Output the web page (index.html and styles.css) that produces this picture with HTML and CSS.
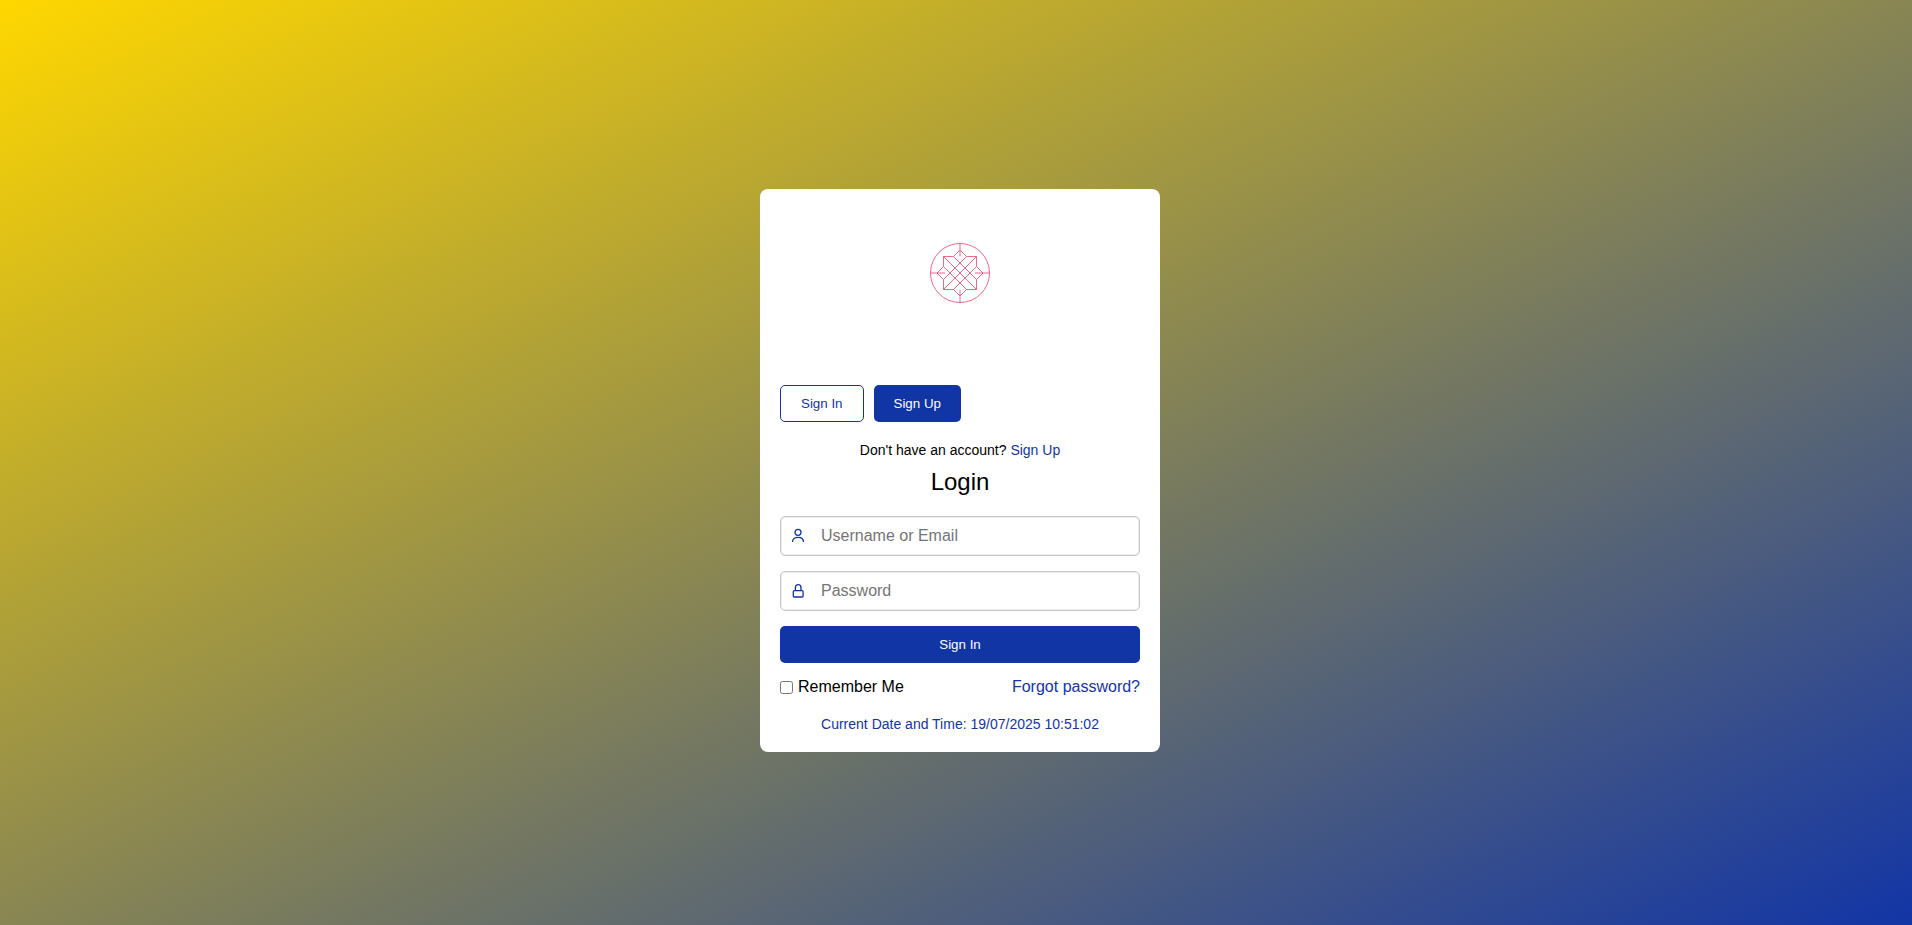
FILE: index.html
```html
<!DOCTYPE html>
<html>
<head>
  <meta charset="UTF-8">
  <title>Login</title>
  <link rel="stylesheet" href="styles.css">
</head>
<body>
  <div class="card">
    <div class="logo">
      <svg width="62" height="62" viewBox="-31 -31 62 62" fill="none" stroke="#e8426a" stroke-width="0.8">
        <circle cx="0" cy="0" r="29.5"/>
        <path d="M0 -29.500V-17M0 29.500V17M-29.500 0H-15M29.500 0H15"/>
        <path d="M-16.500 -16.500H-6.500L0 -23L6.500 -16.500H16.500V-6.500L23 0L16.500 6.500V16.500H6.500L0 23L-6.500 16.500H-16.500V6.500L-23 0L-16.500 -6.500Z"/>
        <path d="M-16.500 -16.500L16.500 16.500M16.500 -16.500L-16.500 16.500"/>
        <path d="M-6.500 -16.500L16.500 6.500M-16.500 -6.500L6.500 16.500M6.500 -16.500L-16.500 6.500M16.500 -6.500L-6.500 16.500"/>
      </svg>
    </div>

    <div class="tabs">
      <button class="btn btn-outline">Sign In</button>
      <button class="btn btn-solid">Sign Up</button>
    </div>

    <p class="switch">Don't have an account? <a href="#">Sign Up</a></p>
    <h2 class="title">Login</h2>

    <form>
      <div class="field">
        <svg class="icon" width="16" height="16" viewBox="0 0 16 16" fill="none" stroke="#1034a6" stroke-width="1.3">
          <circle cx="8" cy="4.300" r="3"/>
          <path d="M2.500 14c0-3 2.400-4.700 5.500-4.700s5.500 1.700 5.500 4.700"/>
        </svg>
        <input type="text" placeholder="Username or Email">
      </div>
      <div class="field">
        <svg class="icon" width="16" height="16" viewBox="0 0 16 16" fill="none" stroke="#1034a6" stroke-width="1.3">
          <rect x="3.300" y="7.700" width="9.800" height="6.300" rx="1"/>
          <path d="M5.400 7.700V4.700a2.800 3 0 0 1 5.600 0v3"/>
        </svg>
        <input type="password" placeholder="Password">
      </div>
      <button type="button" class="btn btn-solid btn-wide">Sign In</button>

      <div class="options">
        <label><input type="checkbox">Remember Me</label>
        <a href="#">Forgot password?</a>
      </div>
    </form>

    <p class="clock">Current Date and Time: 19/07/2025 10:51:02</p>
  </div>
</body>
</html>
```

FILE: styles.css
```css
* {
  box-sizing: border-box;
}
body {
  margin: 0;
  min-height: 100vh;
  padding: 16px 0 0 8px;
  display: flex;
  justify-content: center;
  align-items: center;
  font-family: "Liberation Sans", Arial, sans-serif;
  background: linear-gradient(to bottom right, #ffd700, #1235a6);
}
a {
  color: #1235a6;
  text-decoration: none;
}
.card {
  width: 400px;
  padding: 20px;
  background: #fff;
  border-radius: 8px;
}
.logo {
  height: 176px;
  padding-top: 33px;
  text-align: center;
}
.tabs {
  display: flex;
  gap: 10px;
}
.btn {
  height: 37px;
  padding: 0 20px;
  font-family: inherit;
  font-size: 13.33px;
  border-radius: 5px;
}
.btn-outline {
  background: #fff;
  color: #1235a6;
  border: 1px solid #1235a6;
}
.btn-solid {
  background: #1235a6;
  color: #fff;
  border: none;
}
.btn-wide {
  display: block;
  width: 100%;
}
.switch {
  margin: 20px 0 0;
  font-size: 14px;
  line-height: 16px;
  text-align: center;
}
.title {
  margin: 10px 0 0;
  font-size: 24px;
  line-height: 28px;
  font-weight: normal;
  text-align: center;
}
form {
  margin-top: 20px;
}
.field {
  position: relative;
  margin-bottom: 15px;
}
.icon {
  position: absolute;
  left: 10px;
  top: 12px;
}
.field input {
  display: block;
  width: 100%;
  height: 40px;
  padding: 0 10px 0 40px;
  font-family: inherit;
  font-size: 16px;
  border: 1px solid #c8c8c8;
  border-radius: 5px;
  box-shadow: inset 0 0 0 1px #ededed;
}
.options {
  display: flex;
  justify-content: space-between;
  align-items: center;
  margin-top: 15px;
  font-size: 16px;
  line-height: 18px;
}
.options label {
  display: flex;
  align-items: center;
}
.options input {
  margin: 0 5px 0 0;
}
.clock {
  margin: 20px 0 0;
  font-size: 14px;
  line-height: 16px;
  text-align: center;
  color: #1235a6;
}
```
